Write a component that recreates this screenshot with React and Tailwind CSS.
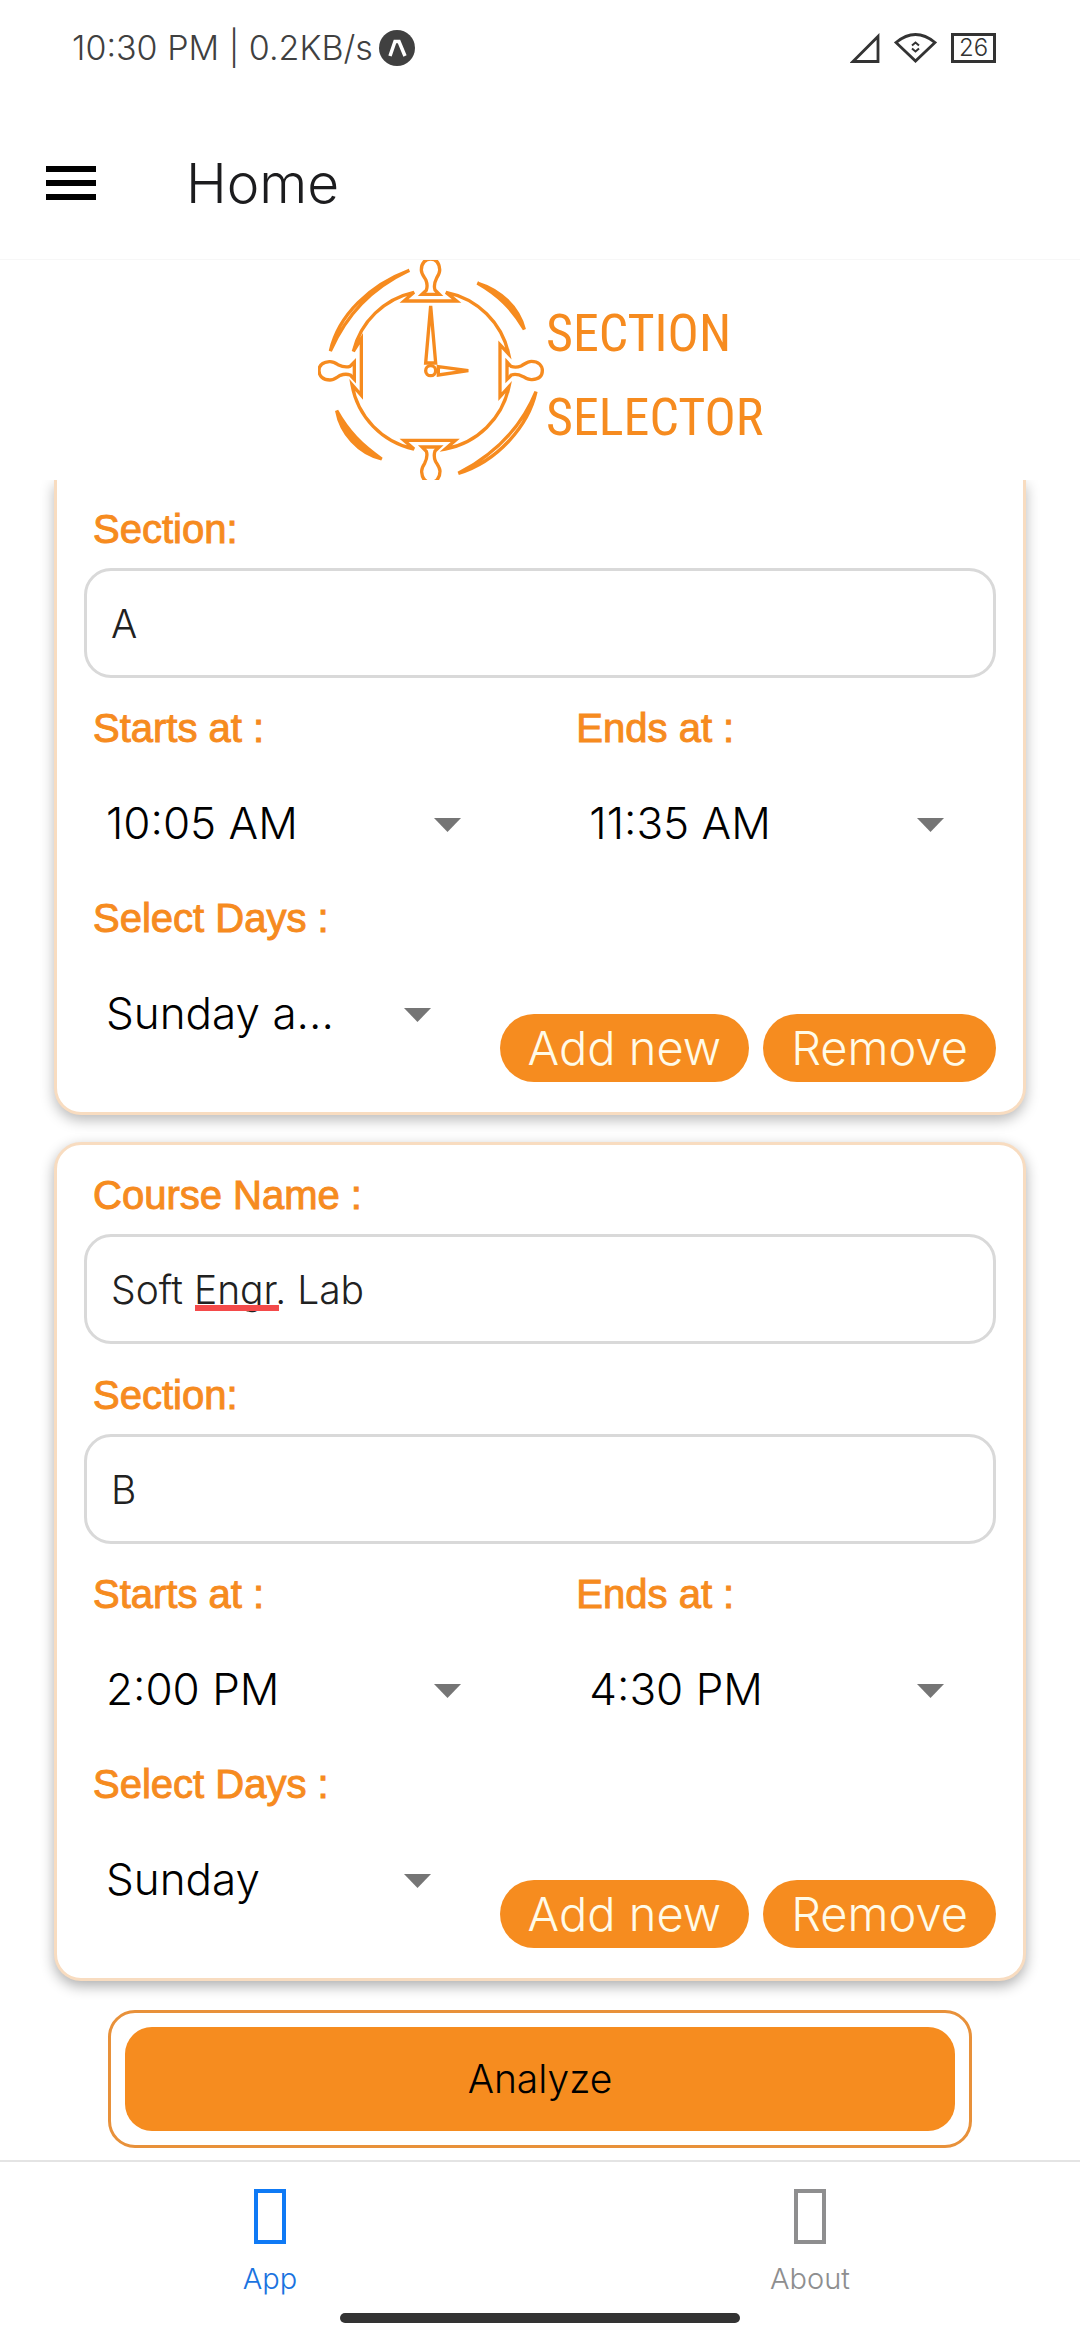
import React, { useId } from "react";

const DAYS = ["Sunday", "Sunday a...", "Monday", "Tuesday", "Wednesday", "Thursday"];
const TIMES = ["10:05 AM", "11:35 AM", "2:00 PM", "4:30 PM"];

function StatusBar() {
  return (
    <div className="flex h-24 items-center justify-between pr-[84px] pl-[72px] text-[#404040]">
      <div className="flex items-center gap-[6px] text-[34px] leading-10">
        <span>10:30 PM | 0.2KB/s</span>
        <svg className="size-9" viewBox="0 0 36 36" aria-hidden="true">
          <circle cx="18" cy="18" r="18" fill="#404040" />
          <path d="M11 26 16 11.500H20L26 26" fill="none" stroke="#fff" strokeWidth="3.500" />
        </svg>
      </div>
      <div className="flex items-center gap-[14px] text-[#333]">
        <svg className="h-[30px] w-[30px]" viewBox="0 0 30 30" fill="none" stroke="#333" strokeWidth="2.800" aria-hidden="true">
          <path d="M3 28.500H28V3.500Z" />
        </svg>
        <svg className="h-[30px] w-[43px]" viewBox="0 0 43 30" fill="none" stroke="#333" strokeWidth="2.800" aria-hidden="true">
          <path d="M2 9.500Q21.500 -6.500 41 9.500L21.500 28Z" />
          <path d="M18 12.500 21.500 9.500 25 12.500M18 15.500 21.500 18.500 25 15.500" strokeWidth="2" />
        </svg>
        <span className="flex h-[30px] w-[45px] items-center justify-center border-[3px] border-[#333] text-2xl leading-6">26</span>
      </div>
    </div>
  );
}

function AppBar() {
  return (
    <header className="flex h-[164px] items-center gap-[90px] border-b border-[#f7f7f7] pt-[10px] pl-[46px]">
      <button type="button" aria-label="Open menu" className="flex w-[50px] flex-col gap-2">
        <span className="h-[6px] bg-black" />
        <span className="h-[6px] bg-black" />
        <span className="h-[6px] bg-black" />
      </button>
      <h1 className="text-[55px] leading-[64px] text-[#1c1c1e]">Home</h1>
    </header>
  );
}

const HANDLE =
  "M366 163H418L405 150C401 138 404 126 410 114C416 105 420 98 419 88C417 66 407 57 392 57C377 57 364 68 364 90C364 102 373 111 378 121C383 134 382 142 379 151Z";

function Logo() {
  return (
    <div className="flex h-[220px] shrink-0 justify-center text-[#f68b1f]">
      <svg className="h-[220px] w-[228px]" viewBox="54 60 684 660" fill="none" stroke="currentColor" strokeWidth="10" aria-hidden="true">
        {[0, 90, 180, 270].map((angle) => (
          <path key={angle} d={HANDLE} transform={`rotate(${angle} 392 392)`} />
        ))}
        <path d="M342 157 312 183H470L438 157A240 240 0 0 1 626 342L600 314V470L627 440A240 240 0 0 1 436 627L466 601H312L342 627A240 240 0 0 1 156 434L184 466V296L160 334A240 240 0 0 1 342 157Z" />
        <path d="M392 198 407 369H377Z" />
        <path d="M415 380 505 392 415 405Z" />
        <circle cx="392" cy="392" r="15" />
        <path d="M328 91C210 135 115 225 91 333C140 225 210 147 328 91Z" />
        <path d="M708 455C685 560 590 665 475 700C590 640 665 560 708 455Z" />
        <path d="M532 129C600 150 655 200 673 268C635 205 595 165 532 129Z" fill="currentColor" />
        <path d="M110 512C122 580 175 640 245 657C185 615 145 575 110 512Z" fill="currentColor" />
      </svg>
      <div className="flex w-[216px] flex-col pt-8 font-['Roboto_Condensed',Roboto,sans-serif] text-[52px] leading-[84px] font-normal">
        <span>SECTION</span>
        <span>SELECTOR</span>
      </div>
    </div>
  );
}

function FieldLabel({ htmlFor, children }) {
  return (
    <label
      htmlFor={htmlFor}
      className="block pl-[9px] font-['Liberation_Sans',sans-serif] text-[40px] leading-[48px] font-normal text-[#f68b1f] [-webkit-text-stroke:1px]"
    >
      {children}
    </label>
  );
}

function TextField({ label, value, misspelled }) {
  const id = useId();
  return (
    <div>
      <FieldLabel htmlFor={id}>{label}</FieldLabel>
      <div className="relative mt-[15px]">
        <input
          id={id}
          type="text"
          defaultValue={value}
          spellCheck={false}
          className="h-[110px] w-full rounded-[27px] border-[3px] border-[#d9d9d9] bg-white px-6 text-[39px] leading-[48px] text-[#212121] outline-none"
        />
        {misspelled && <span className="absolute bottom-[33px] left-[111px] h-[6px] w-[84px] bg-[#f44a4a]" />}
      </div>
    </div>
  );
}

function SelectField({ label, value, options, narrow }) {
  const id = useId();
  return (
    <div>
      <FieldLabel htmlFor={id}>{label}</FieldLabel>
      <div className={narrow ? "relative w-[347px]" : "relative w-[377px]"}>
        <select
          id={id}
          defaultValue={value}
          className="h-[142px] w-full appearance-none bg-transparent pr-12 pl-[22px] text-[44px] leading-[56px] text-black outline-none"
        >
          {options.map((option) => (
            <option key={option}>{option}</option>
          ))}
        </select>
        <svg className="pointer-events-none absolute top-[66px] right-0 h-[14px] w-[27px]" viewBox="0 0 27 14" aria-hidden="true">
          <path d="M0 0H27L13.500 14Z" fill="#757575" />
        </svg>
      </div>
    </div>
  );
}

function PillButton({ children }) {
  return (
    <button type="button" className="h-[68px] rounded-[34px] bg-[#f68c1f] px-7 text-[47px] leading-[68px] text-[#fffbe8]">
      {children}
    </button>
  );
}

function CourseCard({ course, continued }) {
  return (
    <section
      className={
        continued
          ? "shrink-0 rounded-b-[27px] border-x-[3px] border-b-[3px] border-[#f8dcc0] bg-white px-[27px] pt-[25px] pb-7 shadow-[0_5px_14px_rgba(0,0,0,0.28)]"
          : "shrink-0 rounded-[27px] border-[3px] border-[#f8dcc0] bg-white px-[27px] pt-[26px] pb-7 shadow-[0_5px_14px_rgba(0,0,0,0.32)]"
      }
    >
      <div className="flex flex-col gap-[27px]">
        {course.name && <TextField label="Course Name :" value={course.name} misspelled />}
        <TextField label="Section:" value={course.section} />
      </div>
      <div className="mt-[26px] grid grid-cols-[53%_1fr]">
        <SelectField label="Starts at :" value={course.starts} options={TIMES} />
        <SelectField label="Ends at :" value={course.ends} options={TIMES} />
      </div>
      <div className="flex items-end justify-between">
        <SelectField label="Select Days :" value={course.days} options={DAYS} narrow />
        <div className="flex gap-[14px] pb-0.5">
          <PillButton>Add new</PillButton>
          <PillButton>Remove</PillButton>
        </div>
      </div>
    </section>
  );
}

function Tab({ label, active }) {
  return (
    <a href="#" aria-current={active ? "page" : undefined} className={active ? "flex flex-1 flex-col items-center text-[#1a73e0]" : "flex flex-1 flex-col items-center text-[#8e8e8f]"}>
      <span className={active ? "h-[55px] w-8 border-4 border-[#0f7af5]" : "h-[55px] w-8 border-4 border-[#8e8e8f]"} />
      <span className="mt-[17px] text-[29px] leading-9">{label}</span>
    </a>
  );
}

export default function App() {
  return (
    <div className="flex min-h-screen flex-col bg-white font-['Inter','Liberation_Sans',sans-serif] font-light">
      <StatusBar />
      <AppBar />
      <Logo />
      <main className="flex flex-1 flex-col overflow-hidden px-[54px]">
        <CourseCard continued course={{ section: "A", starts: "10:05 AM", ends: "11:35 AM", days: "Sunday a..." }} />
        <div className="mt-[27px] flex flex-col">
          <CourseCard course={{ name: "Soft Engr. Lab", section: "B", starts: "2:00 PM", ends: "4:30 PM", days: "Sunday" }} />
        </div>
        <div className="mx-[54px] mt-[29px] mb-3 rounded-[27px] border-[3px] border-[#e8913a] p-[14px]">
          <button type="button" className="h-[104px] w-full rounded-[27px] bg-[#f68c1f] text-[39px] leading-[48px] text-black">
            Analyze
          </button>
        </div>
      </main>
      <nav className="border-t-2 border-[#e4e4e4] bg-white pt-[27px]">
        <div className="flex">
          <Tab label="App" active />
          <Tab label="About" />
        </div>
        <div className="mx-auto mt-4 mb-[17px] h-[10px] w-[400px] rounded-full bg-[#333]" />
      </nav>
    </div>
  );
}
